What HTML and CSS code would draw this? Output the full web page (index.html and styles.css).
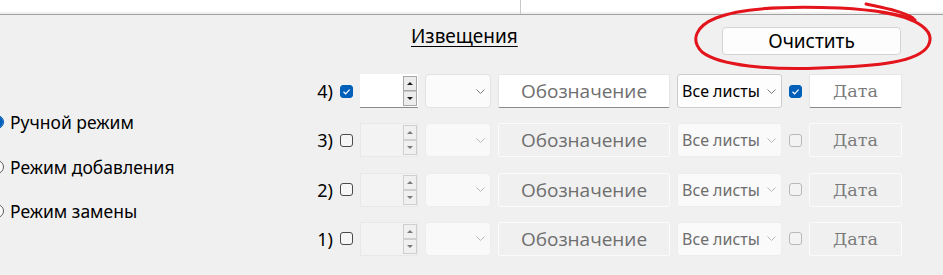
FILE: index.html
```html
<!DOCTYPE html>
<html lang="ru">
<head>
    <meta charset="UTF-8">
    <meta name="viewport" content="width=device-width, initial-scale=1.0">
    <title>Извещения</title>
    <link rel="stylesheet" href="styles.css">
</head>
<body>
    <div class="topbar">
        <div class="tab-left"></div>
        <div class="tab-right"></div>
    </div>
    <div class="main">
        <div class="modes">
            <label class="mode"><span class="radio checked"></span>Ручной режим</label>
            <label class="mode"><span class="radio"></span>Режим добавления</label>
            <label class="mode"><span class="radio"></span>Режим замены</label>
        </div>
        <div class="panel">
            <div class="panel-head">
                <span class="title">Извещения</span>
                <button class="clear-btn">Очистить</button>
            </div>
            <div class="rows">
                <div class="row">
                    <span class="num">4)</span>
                    <span class="check checked"><svg viewBox="0 0 13 13"><polyline points="3.5,6.8 5.6,8.8 9.6,4.6"/></svg></span>
                    <div class="spin">
                        <div class="spin-btns">
                            <span class="spin-btn"><i class="up"></i></span>
                            <span class="spin-btn"><i class="down"></i></span>
                        </div>
                    </div>
                    <div class="combo"><svg class="chev" viewBox="0 0 9 5"><polyline points="0.5,0.5 4.5,4.5 8.5,0.5"/></svg></div>
                    <div class="field wide">Обозначение</div>
                    <div class="combo sheets">Все листы<svg class="chev" viewBox="0 0 9 5"><polyline points="0.5,0.5 4.5,4.5 8.5,0.5"/></svg></div>
                    <span class="check checked"><svg viewBox="0 0 13 13"><polyline points="3.5,6.8 5.6,8.8 9.6,4.6"/></svg></span>
                    <div class="field date">Дата</div>
                </div>
                <div class="row off">
                    <span class="num">3)</span>
                    <span class="check"></span>
                    <div class="spin">
                        <div class="spin-btns">
                            <span class="spin-btn"><i class="up"></i></span>
                            <span class="spin-btn"><i class="down"></i></span>
                        </div>
                    </div>
                    <div class="combo"><svg class="chev" viewBox="0 0 9 5"><polyline points="0.5,0.5 4.5,4.5 8.5,0.5"/></svg></div>
                    <div class="field wide">Обозначение</div>
                    <div class="combo sheets">Все листы<svg class="chev" viewBox="0 0 9 5"><polyline points="0.5,0.5 4.5,4.5 8.5,0.5"/></svg></div>
                    <span class="check dim"></span>
                    <div class="field date">Дата</div>
                </div>
                <div class="row off">
                    <span class="num">2)</span>
                    <span class="check"></span>
                    <div class="spin">
                        <div class="spin-btns">
                            <span class="spin-btn"><i class="up"></i></span>
                            <span class="spin-btn"><i class="down"></i></span>
                        </div>
                    </div>
                    <div class="combo"><svg class="chev" viewBox="0 0 9 5"><polyline points="0.5,0.5 4.5,4.5 8.5,0.5"/></svg></div>
                    <div class="field wide">Обозначение</div>
                    <div class="combo sheets">Все листы<svg class="chev" viewBox="0 0 9 5"><polyline points="0.5,0.5 4.5,4.5 8.5,0.5"/></svg></div>
                    <span class="check dim"></span>
                    <div class="field date">Дата</div>
                </div>
                <div class="row off">
                    <span class="num">1)</span>
                    <span class="check"></span>
                    <div class="spin">
                        <div class="spin-btns">
                            <span class="spin-btn"><i class="up"></i></span>
                            <span class="spin-btn"><i class="down"></i></span>
                        </div>
                    </div>
                    <div class="combo"><svg class="chev" viewBox="0 0 9 5"><polyline points="0.5,0.5 4.5,4.5 8.5,0.5"/></svg></div>
                    <div class="field wide">Обозначение</div>
                    <div class="combo sheets">Все листы<svg class="chev" viewBox="0 0 9 5"><polyline points="0.5,0.5 4.5,4.5 8.5,0.5"/></svg></div>
                    <span class="check dim"></span>
                    <div class="field date">Дата</div>
                </div>
            </div>
        </div>
    </div>
    <!-- red hand-drawn mark around the button -->
    <svg class="mark" viewBox="0 0 943 275">
        <path d="M866 4 C884 8, 902 11, 913 18"/>
        <path d="M880 12 C920 18, 936 32, 928 46 C918 62, 880 66, 820 68 C770 70, 720 66, 702 52 C690 40, 696 26, 716 18 C740 8, 790 6, 840 8 C875 10, 900 14, 915 20"/>
    </svg>
</body>
</html>
```

FILE: styles.css
```css
body {
    margin: 0;
    background-color: #f0f0f0;
    font-family: "Noto Sans", sans-serif;
    color: #000;
    height: 275px;
    overflow: hidden;
}
.topbar {
    display: flex;
    height: 12px;
    background-color: #fff;
    border-bottom: 2px solid #f0f0f0;
    box-shadow: 0 1px 0 #a0a0a0;
}
.tab-left {
    width: 520px;
    border-right: 1px solid #c8c8c8;
    margin-bottom: -2px;
}
.tab-right {
    flex: 1;
}
.main {
    display: flex;
    margin-top: 1px;
}
.modes {
    width: 300px;
    padding-top: 95px;
    display: flex;
    flex-direction: column;
    gap: 20.5px;
}
.mode {
    display: flex;
    align-items: center;
    height: 24px;
    font-size: 17.5px;
    white-space: nowrap;
}
.radio {
    width: 12px;
    height: 12px;
    border: 1px solid #5c5c5c;
    border-radius: 50%;
    background-color: #fafafa;
    margin-left: -10px;
    margin-right: 6px;
    flex: none;
}
.radio.checked {
    background-color: #005fb8;
    border-color: #005fb8;
    box-shadow: inset 0 0 0 3px #005fb8, inset 0 0 0 6px #fff;
}
.panel {
    flex: 1;
}
.panel-head {
    display: flex;
    align-items: flex-start;
    height: 59px;
}
.title {
    margin-left: 111px;
    margin-top: 9px;
    font-size: 19px;
    line-height: 24px;
    text-decoration: underline;
    text-underline-offset: 3px;
    text-decoration-thickness: 1px;
}
.clear-btn {
    margin-left: auto;
    margin-right: 42px;
    margin-top: 12px;
    width: 179px;
    height: 28px;
    background-color: #fdfdfd;
    border: 1px solid #d4d4d4;
    border-radius: 4px;
    font-family: "Noto Sans", sans-serif;
    font-size: 19px;
    line-height: 24px;
    color: #000;
    padding: 0;
}
.rows {
    display: flex;
    flex-direction: column;
    gap: 15.3px;
}
.row {
    display: flex;
    align-items: center;
    gap: 7px;
    height: 34px;
}
.num {
    width: 33px;
    text-align: right;
    font-size: 18px;
}
.check {
    width: 11px;
    height: 11px;
    border: 1px solid #4a4a4a;
    border-radius: 3px;
    background-color: #f6f6f6;
    flex: none;
}
.check svg {
    display: block;
    width: 13px;
    height: 13px;
    margin: -1px;
    fill: none;
    stroke: #fff;
    stroke-width: 1.2;
}
.check.checked {
    background-color: #005fb8;
    border-color: #005fb8;
}
.check.dim {
    border-color: #b8b8b8;
    background-color: #f3f3f3;
}
.spin {
    width: 58px;
    height: 34px;
    box-sizing: border-box;
    background-color: #fff;
    border-bottom: 1px solid #8a8a8a;
    display: flex;
    justify-content: flex-end;
    align-items: center;
    padding-right: 1px;
}
.spin-btns {
    display: flex;
    flex-direction: column;
    width: 14px;
}
.spin-btn {
    height: 15px;
    box-sizing: border-box;
    border: 1px solid #a8a8a8;
    background-color: #ececec;
    display: flex;
    align-items: center;
    justify-content: center;
}
.spin-btn + .spin-btn {
    border-top-color: #c8c8c8;
}
.spin-btn i {
    width: 0;
    height: 0;
    border-left: 3px solid transparent;
    border-right: 3px solid transparent;
}
.spin-btn .up {
    border-bottom: 3px solid #1a1a1a;
}
.spin-btn .down {
    border-top: 3px solid #1a1a1a;
}
.combo {
    width: 66px;
    height: 34px;
    box-sizing: border-box;
    background-color: #fbfbfb;
    border: 1px solid #e2e2e2;
    border-radius: 4px;
    display: flex;
    align-items: center;
    justify-content: flex-end;
    padding-right: 5px;
}
.chev {
    width: 9px;
    height: 5px;
    fill: none;
    stroke: #7a7a7a;
    stroke-width: 1;
}
.combo.sheets {
    width: 105px;
    justify-content: space-between;
    padding-left: 4px;
    padding-right: 5px;
    background-color: #fdfdfd;
    border-color: #cdcdcd;
    border-radius: 3px;
    font-size: 16px;
    white-space: nowrap;
}
.field {
    height: 34px;
    box-sizing: border-box;
    background-color: #fff;
    border: 1px solid #e6e6e6;
    border-bottom-color: #8a8a8a;
    border-radius: 2px;
    display: flex;
    align-items: center;
    justify-content: center;
    color: #6e6e6e;
    white-space: nowrap;
}
.field.wide {
    width: 172px;
    font-family: "Open Sans", sans-serif;
    font-size: 19px;
}
.field.date {
    width: 93px;
    font-family: "DejaVu Serif", serif;
    font-size: 17.5px;
    color: #7a7a7a;
}
.row.off .spin {
    background-color: #f3f3f3;
    border: 1px solid #e8e8e8;
    padding-right: 0;
}
.row.off .spin-btn {
    border-color: #cfcfcf;
    background-color: #f0f0f0;
}
.row.off .spin-btn .up {
    border-bottom-color: #7a7a7a;
}
.row.off .spin-btn .down {
    border-top-color: #7a7a7a;
}
.row.off .combo {
    background-color: #f9f9f9;
    border-color: #ededed;
}
.row.off .chev {
    stroke: #b8b8b8;
}
.row.off .combo.sheets {
    color: #6e6e6e;
    background-color: #fafafa;
}
.row.off .field {
    background-color: #f0f0f0;
    border-color: #fbfbfb;
}
.mark {
    position: absolute;
    left: 0;
    top: 0;
    width: 943px;
    height: 275px;
    fill: none;
    stroke: #e3141b;
    stroke-width: 3;
    stroke-linecap: round;
    pointer-events: none;
}
```
